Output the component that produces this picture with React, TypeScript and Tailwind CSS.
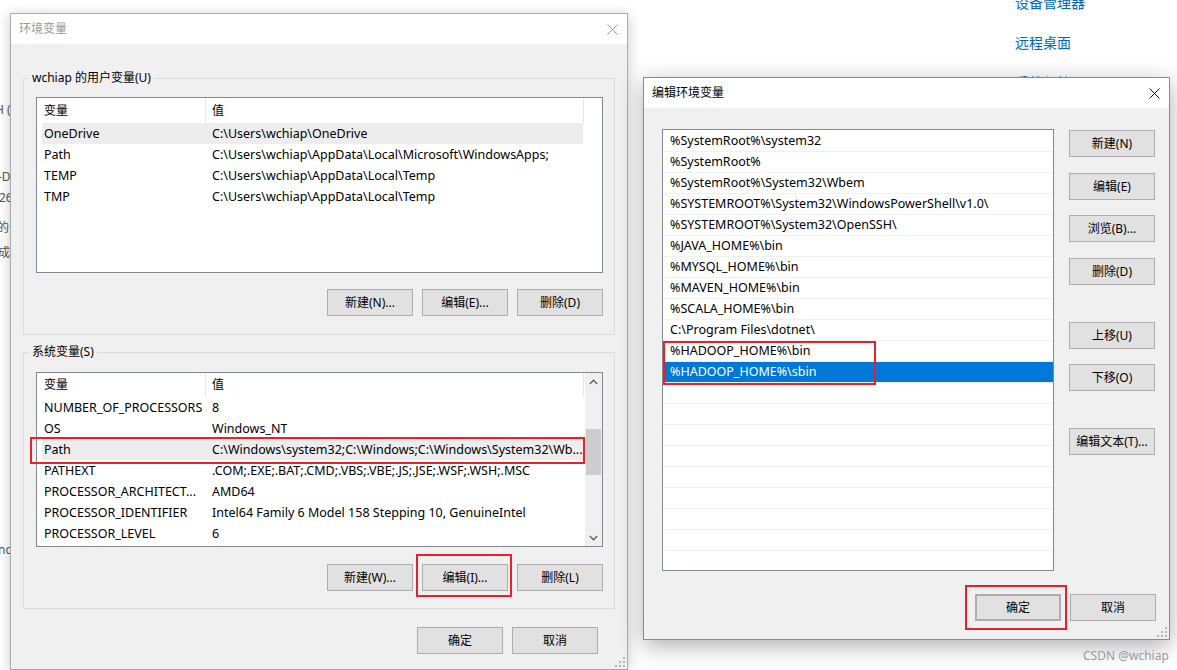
import React from "react";

const F = "[font-family:'Noto_Sans','Noto_Sans_CJK_SC',sans-serif]";

function Btn({ children, className = "" }: { children: React.ReactNode; className?: string }) {
  return (
    <div
      className={`flex h-[27px] w-[86px] shrink-0 items-center justify-center border border-[#adadad] bg-[#e1e1e1] text-[12px] leading-none text-black ${className}`}
    >
      {children}
    </div>
  );
}

function CloseX({ color }: { color: string }) {
  return (
    <svg width="11" height="11" viewBox="0 0 11 11">
      <path d="M0.5 0.5 L10.5 10.5 M10.5 0.5 L0.5 10.5" stroke={color} strokeWidth="1" fill="none" />
    </svg>
  );
}

function Grip() {
  return (
    <svg width="10" height="10" viewBox="0 0 10 10">
      <rect x="8" y="0" width="2" height="2" fill="#b8b8b8" />
      <rect x="8" y="4" width="2" height="2" fill="#b8b8b8" />
      <rect x="4" y="4" width="2" height="2" fill="#b8b8b8" />
      <rect x="8" y="8" width="2" height="2" fill="#b8b8b8" />
      <rect x="4" y="8" width="2" height="2" fill="#b8b8b8" />
      <rect x="0" y="8" width="2" height="2" fill="#b8b8b8" />
    </svg>
  );
}

type Row = [string, string];

function VarList({
  rows,
  headerClass,
  selected,
  scroll,
}: {
  rows: Row[];
  headerClass: string;
  selected: number;
  scroll?: boolean;
}) {
  return (
    <div className="flex h-full w-full border border-[#828790] bg-white">
      <div className="flex min-w-0 flex-1 flex-col">
        <div className={`flex shrink-0 ${headerClass}`}>
          <div className="flex w-[169px] items-center border-r border-[#e5e5e5] pl-[7px]">变量</div>
          <div className="flex w-[378px] items-center border-r border-[#e5e5e5] pl-[6px]">值</div>
        </div>
        {rows.map((r, i) => (
          <div
            key={i}
            className={`ml-[5px] flex h-[21px] w-[541px] shrink-0 items-center whitespace-nowrap pt-[1px] text-[12.5px] ${
              i === selected ? "bg-[#ededed]" : ""
            }`}
          >
            <div className="w-[163px] overflow-hidden pl-[2px]">{r[0]}</div>
            <div className="overflow-hidden pl-[7px]">{r[1]}</div>
          </div>
        ))}
      </div>
      {scroll && (
        <div className="flex w-[17px] shrink-0 flex-col bg-[#f0f0f0]">
          <div className="flex h-[17px] items-center justify-center">
            <svg width="9" height="6" viewBox="0 0 9 6">
              <path d="M0.8 5 L4.5 1.2 L8.2 5" stroke="#606060" strokeWidth="1.3" fill="none" />
            </svg>
          </div>
          <div className="flex-1">
            <div className="mx-auto mt-[39px] h-[46px] w-[15px] bg-[#cdcdcd]" />
          </div>
          <div className="flex h-[17px] items-center justify-center">
            <svg width="9" height="6" viewBox="0 0 9 6">
              <path d="M0.8 1 L4.5 4.8 L8.2 1" stroke="#606060" strokeWidth="1.3" fill="none" />
            </svg>
          </div>
        </div>
      )}
    </div>
  );
}

function Group({
  label,
  className,
  children,
}: {
  label: string;
  className: string;
  children: React.ReactNode;
}) {
  return (
    <div className={`relative flex flex-col border border-[#dcdcdc] ${className}`}>
      <span className="absolute left-[5px] top-[-9px] bg-[#f0f0f0] px-[3px] text-[12px] leading-[16px] text-black">
        {label}
      </span>
      {children}
    </div>
  );
}

const userRows: Row[] = [
  ["OneDrive", "C:\\Users\\wchiap\\OneDrive"],
  ["Path", "C:\\Users\\wchiap\\AppData\\Local\\Microsoft\\WindowsApps;"],
  ["TEMP", "C:\\Users\\wchiap\\AppData\\Local\\Temp"],
  ["TMP", "C:\\Users\\wchiap\\AppData\\Local\\Temp"],
];

const sysRows: Row[] = [
  ["NUMBER_OF_PROCESSORS", "8"],
  ["OS", "Windows_NT"],
  ["Path", "C:\\Windows\\system32;C:\\Windows;C:\\Windows\\System32\\Wb..."],
  ["PATHEXT", ".COM;.EXE;.BAT;.CMD;.VBS;.VBE;.JS;.JSE;.WSF;.WSH;.MSC"],
  ["PROCESSOR_ARCHITECT...", "AMD64"],
  ["PROCESSOR_IDENTIFIER", "Intel64 Family 6 Model 158 Stepping 10, GenuineIntel"],
  ["PROCESSOR_LEVEL", "6"],
];

const pathRows: string[] = [
  "%SystemRoot%\\system32",
  "%SystemRoot%",
  "%SystemRoot%\\System32\\Wbem",
  "%SYSTEMROOT%\\System32\\WindowsPowerShell\\v1.0\\",
  "%SYSTEMROOT%\\System32\\OpenSSH\\",
  "%JAVA_HOME%\\bin",
  "%MYSQL_HOME%\\bin",
  "%MAVEN_HOME%\\bin",
  "%SCALA_HOME%\\bin",
  "C:\\Program Files\\dotnet\\",
  "%HADOOP_HOME%\\bin",
  "%HADOOP_HOME%\\sbin",
  "",
  "",
  "",
  "",
  "",
  "",
  "",
  "",
  "",
];

export default function App() {
  return (
    <div className={`relative h-[670px] w-[1177px] overflow-hidden bg-white text-[12px] text-black ${F}`}>
      {/* desktop fragments behind the left dialog */}
      <div className="absolute left-0 top-0 h-[670px] w-[40px] text-[12px] text-[#555]">
        <span className="absolute left-[-5px] top-[101px] whitespace-nowrap">H (C:)</span>
        <span className="absolute left-[-2px] top-[168px] whitespace-nowrap">-D-2</span>
        <span className="absolute left-[-1px] top-[189px] whitespace-nowrap">2600</span>
        <span className="absolute left-[-3px] top-[219px] whitespace-nowrap">的处理</span>
        <span className="absolute left-[-2px] top-[244px] whitespace-nowrap">成就</span>
        <span className="absolute left-[-2px] top-[541px] whitespace-nowrap">ncel</span>
      </div>

      {/* desktop links on the right */}
      <div className="absolute left-[1015px] top-[-18px] flex flex-col text-[14px] text-[#0067c0]">
        <div className="flex h-[40px] items-center">设备管理器</div>
        <div className="flex h-[40px] items-center">远程桌面</div>
        <div className="flex h-[40px] items-center">系统保护</div>
      </div>

      {/* 环境变量 dialog */}
      <div className="absolute left-[10px] top-[13px] flex h-[657px] w-[618px] flex-col border border-[#aaaaaa] bg-[#f0f0f0] shadow-[0_2px_12px_rgba(0,0,0,0.22)]">
        <div className="flex h-[30px] shrink-0 items-center justify-between bg-white pl-[8px] pr-[9px] text-[12px] text-[#999]">
          <span>环境变量</span>
          <CloseX color="#9a9a9a" />
        </div>
        <div className="flex flex-1 flex-col px-[12px] pt-[34px]">
          <Group label="wchiap 的用户变量(U)" className="h-[257px] px-[12px] pt-[18px]">
            <div className="h-[176px] w-[567px] shrink-0">
              <VarList rows={userRows} headerClass="h-[25px]" selected={0} />
            </div>
            <div className="-mr-[1px] mt-[16px] flex justify-end gap-[9px]">
              <Btn>新建(N)...</Btn>
              <Btn>编辑(E)...</Btn>
              <Btn>删除(D)</Btn>
            </div>
          </Group>
          <Group label="系统变量(S)" className="mt-[17px] h-[257px] px-[12px] pt-[19px]">
            <div className="h-[175px] w-[567px] shrink-0">
              <VarList rows={sysRows} headerClass="h-[24px]" selected={2} scroll />
            </div>
            <div className="-mr-[1px] mt-[17px] flex justify-end gap-[9px]">
              <Btn>新建(W)...</Btn>
              <Btn>编辑(I)...</Btn>
              <Btn>删除(L)</Btn>
            </div>
          </Group>
          <div className="mt-[18px] flex justify-end gap-[9px] pr-[17px]">
            <Btn>确定</Btn>
            <Btn>取消</Btn>
          </div>
        </div>
        <div className="absolute bottom-[2px] right-[2px]">
          <Grip />
        </div>
      </div>

      {/* 编辑环境变量 dialog */}
      <div className="absolute left-[643px] top-[77px] flex h-[563px] w-[527px] flex-col border border-[#8a8a8a] bg-[#f0f0f0] shadow-[0_6px_22px_rgba(0,0,0,0.32)]">
        <div className="flex h-[30px] shrink-0 items-center justify-between bg-white pl-[8px] pr-[9px] text-[12px] text-black">
          <span>编辑环境变量</span>
          <CloseX color="#111" />
        </div>
        <div className="flex flex-1 flex-col pl-[18px] pt-[21px]">
          <div className="flex">
            <div className="h-[442px] w-[392px] shrink-0 overflow-hidden border border-[#828790] bg-white pt-[1px]">
              {pathRows.map((p, i) => (
                <div
                  key={i}
                  className={`flex h-[21px] items-center whitespace-nowrap border-b border-[#f0f0f0] pl-[7px] pt-[1px] text-[12.5px] ${
                    i === 11 ? "bg-[#0078d7] text-white" : ""
                  }`}
                >
                  {p}
                </div>
              ))}
            </div>
            <div className="ml-[15px] mt-[1px] flex flex-col">
              <Btn>新建(N)</Btn>
              <Btn className="mt-[16px]">编辑(E)</Btn>
              <Btn className="mt-[15px]">浏览(B)...</Btn>
              <Btn className="mt-[16px]">删除(D)</Btn>
              <Btn className="mt-[37px]">上移(U)</Btn>
              <Btn className="mt-[15px]">下移(O)</Btn>
              <Btn className="mt-[37px]">编辑文本(T)...</Btn>
            </div>
          </div>
          <div className="mt-[23px] flex justify-end gap-[9px] pr-[13px]">
            <Btn className="border-2 border-[#0078d7]">确定</Btn>
            <Btn>取消</Btn>
          </div>
        </div>
        <div className="absolute bottom-[2px] right-[2px]">
          <Grip />
        </div>
      </div>

      {/* red annotation boxes */}
      <div className="absolute left-[30px] top-[437px] h-[27px] w-[555px] border-2 border-[#e8202a]" />
      <div className="absolute left-[416px] top-[554px] h-[43px] w-[96px] border-2 border-[#e8202a]" />
      <div className="absolute left-[663px] top-[341px] h-[44px] w-[213px] border-2 border-[#e8202a]" />
      <div className="absolute left-[965px] top-[585px] h-[45px] w-[102px] border-2 border-[#e8202a]" />

      {/* watermark */}
      <div className="absolute left-[1083px] top-[647px] text-[12px] text-[#9a9a9a]">CSDN @wchiap</div>
    </div>
  );
}
